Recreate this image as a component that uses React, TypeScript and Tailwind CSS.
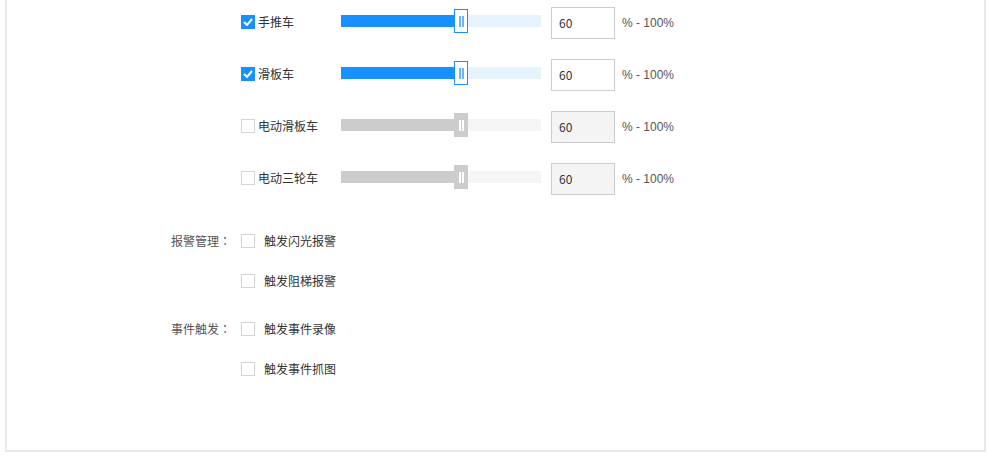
import React from 'react';

type Vehicle = { name: string; checked: boolean; value: number };

const vehicles: Vehicle[] = [
  { name: '手推车', checked: true, value: 60 },
  { name: '滑板车', checked: true, value: 60 },
  { name: '电动滑板车', checked: false, value: 60 },
  { name: '电动三轮车', checked: false, value: 60 },
];

function Checkbox({ checked }: { checked: boolean }) {
  if (checked) {
    return (
      <span className="w-[14px] h-[14px] bg-[#1890ff] flex items-center justify-center shrink-0">
        <svg width="10" height="8" viewBox="0 0 10 8">
          <path d="M1 4 L4 7 L9 1" fill="none" stroke="#fff" strokeWidth="2" />
        </svg>
      </span>
    );
  }
  return <span className="w-[14px] h-[14px] bg-white border border-[#d4d4d4] shrink-0" />;
}

function Slider({ value, enabled }: { value: number; enabled: boolean }) {
  return (
    <div
      className={`relative w-[200px] h-[12px] -mt-[4px] ${enabled ? 'bg-[#e6f3fd]' : 'bg-[#f5f5f5]'}`}
    >
      <div
        className={`h-full ${enabled ? 'bg-[#1890ff]' : 'bg-[#cccccc]'}`}
        style={{ width: `${value}%` }}
      />
      <div
        className={`absolute top-[-6px] w-[14px] h-[24px] flex items-center justify-center gap-[1px] ${
          enabled ? 'bg-white border border-[#1890ff]' : 'bg-[#cccccc]'
        }`}
        style={{ left: `calc(${value}% - 7px)` }}
      >
        <span className={`w-[2px] h-[11px] ${enabled ? 'bg-[#6cb6f5]' : 'bg-white'}`} />
        <span className={`w-[2px] h-[11px] ${enabled ? 'bg-[#6cb6f5]' : 'bg-white'}`} />
      </div>
    </div>
  );
}

function VehicleRow({ v }: { v: Vehicle }) {
  return (
    <div className="flex items-center h-[32px]">
      <div className="w-[100px] flex items-center gap-[3px] -mt-[2px]">
        <Checkbox checked={v.checked} />
        <span className="text-[12px] text-[#333]">{v.name}</span>
      </div>
      <Slider value={v.value} enabled={v.checked} />
      <div
        className={`ml-[10px] w-[64px] h-[32px] border border-[#cccccc] flex items-center pl-[7px] text-[12px] text-[#333] ${
          v.checked ? 'bg-white' : 'bg-[#f4f4f4]'
        }`}
      >
        {v.value}
      </div>
      <span className="ml-[7px] text-[12px] text-[#555] font-['Liberation_Sans',sans-serif]">% - 100%</span>
    </div>
  );
}

function OptionGroup({ label, options }: { label: string; options: string[] }) {
  return (
    <div className="flex">
      <div className="w-[234px] flex justify-end pr-[10px] text-[12px] text-[#555] h-[14px] leading-[14px]">
        <span>{label}</span>
        <span className="w-[12px] text-center font-['Noto_Sans_CJK_JP',sans-serif]">：</span>
      </div>
      <div className="flex flex-col gap-[26px]">
        {options.map((o) => (
          <div key={o} className="flex items-center h-[14px]">
            <Checkbox checked={false} />
            <span className="ml-[9px] text-[12px] text-[#333]">{o}</span>
          </div>
        ))}
      </div>
    </div>
  );
}

export default function App() {
  return (
    <div className="w-[988px] h-[456px] bg-white font-['Noto_Sans_CJK_SC',sans-serif]">
      <div className="ml-[5px] w-[981px] h-[452px] border-2 border-t-0 border-[#e9e9e9]">
        <div className="pl-[234px] pt-[7px] flex flex-col gap-[20px]">
          {vehicles.map((v) => (
            <VehicleRow key={v.name} v={v} />
          ))}
        </div>
        <div className="mt-[39px] flex flex-col gap-[34px]">
          <OptionGroup label="报警管理" options={['触发闪光报警', '触发阻梯报警']} />
          <OptionGroup label="事件触发" options={['触发事件录像', '触发事件抓图']} />
        </div>
      </div>
    </div>
  );
}
